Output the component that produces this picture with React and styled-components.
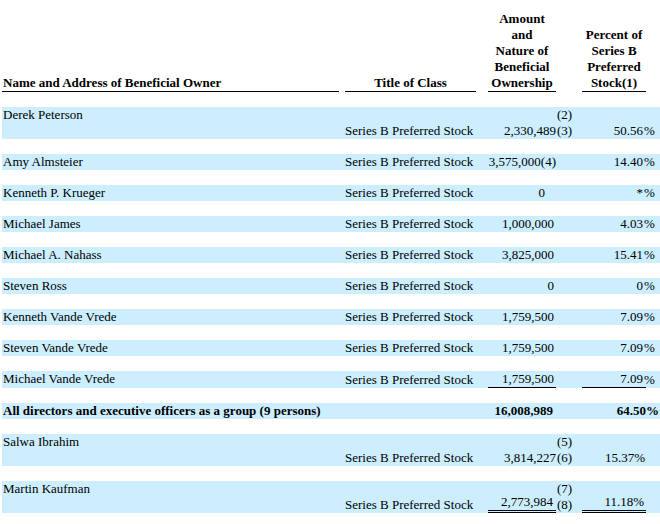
import React from "react";
import styled, { createGlobalStyle } from "styled-components";

const GlobalStyle = createGlobalStyle`
    html, body {
        margin: 0;
        padding: 0;
        background: #ffffff;
    }
    body {
        font-family: "Liberation Serif", "Times New Roman", serif;
        font-size: 13px;
        line-height: 16px;
        color: #000000;
    }
`;

// column widths (px) - name | title | amount | footnote | percent | % sign
const COLS = {
    name: { w: 337 },
    title: { w: 131, ml: 6 },
    amt: { w: 68, ml: 12 },
    fn: { w: 26 },
    pct: { w: 64 },
    sign: { w: 14 },
};

const Page = styled.div`
    width: 658px;
    padding: 11px 0 0 2px;
`;

const HeadRow = styled.div`
    display: flex;
    height: 81px;
    font-weight: bold;
`;

const HeadCell = styled.div`
    box-sizing: border-box;
    width: ${p => p.$w}px;
    margin-left: ${p => p.$ml || 0}px;
    display: flex;
    flex-direction: column;
    justify-content: flex-end;
    text-align: ${p => p.$align || "center"};
    padding-left: ${p => (p.$align === "left" ? 1 : 0)}px;
    border-bottom: ${p => (p.$plain ? "none" : "1px solid #000")};
`;

const Body = styled.div`
    display: flex;
    flex-direction: column;
    gap: 15px;
    margin-top: 15px;
`;

const Row = styled.div`
    display: flex;
    height: ${p => p.$lines * 16 + (p.$rule === "single" ? 1 : 0)}px;
    background: #cceeff;
    font-weight: ${p => (p.$bold ? "bold" : "normal")};
`;

const Cell = styled.div`
    box-sizing: border-box;
    width: ${p => p.$w}px;
    margin-left: ${p => p.$ml || 0}px;
    display: flex;
    flex-direction: column;
    justify-content: ${p => (p.$top ? "flex-start" : "flex-end")};
    text-align: ${p => p.$align || "left"};
    padding-left: ${p => p.$pl || 0}px;
    padding-right: ${p => p.$pr || 0}px;
    white-space: nowrap;
    border-bottom: ${p =>
        p.$rule === "double"
            ? "3px double #000"
            : p.$rule === "single"
            ? "1px solid #000"
            : "none"};
`;

const rows = [
    {
        name: "Derek Peterson",
        amt: "2,330,489",
        amtPr: 0,
        fn: ["(2)", "(3)"],
        pct: "50.56",
        sign: "%",
        lines: 2,
    },
    { name: "Amy Almsteier", amt: "3,575,000(4)", amtPr: 0, pct: "14.40", sign: "%" },
    { name: "Kenneth P. Krueger", amt: "0", amtPr: 11, pct: "*", sign: "%" },
    { name: "Michael James", amt: "1,000,000", pct: "4.03", sign: "%" },
    { name: "Michael A. Nahass", amt: "3,825,000", pct: "15.41", sign: "%" },
    { name: "Steven Ross", amt: "0", pct: "0", sign: "%" },
    { name: "Kenneth Vande Vrede", amt: "1,759,500", pct: "7.09", sign: "%" },
    { name: "Steven Vande Vrede", amt: "1,759,500", pct: "7.09", sign: "%" },
    {
        name: "Michael Vande Vrede",
        amt: "1,759,500",
        pct: "7.09",
        sign: "%",
        rule: "single",
    },
    {
        name: "All directors and executive officers as a group (9 persons)",
        title: "",
        amt: "16,008,989",
        amtPr: 3,
        pct: "64.50",
        pctPr: 0,
        sign: "%",
        signMl: 0,
        bold: true,
    },
    {
        name: "Salwa Ibrahim",
        amt: "3,814,227",
        amtPr: 0,
        fn: ["(5)", "(6)"],
        pct: "15.37%",
        pctPr: 1,
        sign: "",
        lines: 2,
    },
    {
        name: "Martin Kaufman",
        amt: "2,773,984",
        amtPr: 3,
        fn: ["(7)", "(8)"],
        pct: "11.18%",
        pctPr: 2,
        sign: "",
        lines: 2,
        rule: "double",
    },
];

export default function App() {
    return (
        <Page>
            <GlobalStyle />
            <HeadRow>
                <HeadCell $w={COLS.name.w} $align="left">
                    Name and Address of Beneficial Owner
                </HeadCell>
                <HeadCell $w={COLS.title.w} $ml={COLS.title.ml}>
                    Title of Class
                </HeadCell>
                <HeadCell $w={COLS.amt.w} $ml={COLS.amt.ml}>
                    <div>Amount</div>
                    <div>and</div>
                    <div>Nature of</div>
                    <div>Beneficial</div>
                    <div>Ownership</div>
                </HeadCell>
                <HeadCell $w={COLS.fn.w} $plain />
                <HeadCell $w={COLS.pct.w}>
                    <div>Percent of</div>
                    <div>Series B</div>
                    <div>Preferred</div>
                    <div>Stock(1)</div>
                </HeadCell>
            </HeadRow>
            <Body>
                {rows.map(item => {
                    const lines = item.lines || 1;
                    return (
                        <Row
                            key={item.name}
                            $lines={lines}
                            $rule={item.rule}
                            $bold={item.bold}
                        >
                            <Cell $w={COLS.name.w} $pl={1} $top>
                                {item.name}
                            </Cell>
                            <Cell $w={COLS.title.w} $ml={COLS.title.ml}>
                                {item.title === undefined
                                    ? "Series B Preferred Stock"
                                    : item.title}
                            </Cell>
                            <Cell
                                $w={COLS.amt.w}
                                $ml={COLS.amt.ml}
                                $align="right"
                                $pr={item.amtPr === undefined ? 2 : item.amtPr}
                                $rule={item.rule}
                            >
                                {item.amt}
                            </Cell>
                            <Cell $w={COLS.fn.w} $pl={1}>
                                {item.fn &&
                                    item.fn.map(f => <div key={f}>{f}</div>)}
                            </Cell>
                            <Cell
                                $w={COLS.pct.w}
                                $align="right"
                                $pr={item.pctPr === undefined ? 3 : item.pctPr}
                                $rule={item.rule}
                            >
                                {item.pct}
                            </Cell>
                            <Cell
                                $w={COLS.sign.w}
                                $ml={item.signMl === undefined ? -2 : item.signMl}
                            >
                                {item.sign}
                            </Cell>
                        </Row>
                    );
                })}
            </Body>
        </Page>
    );
}
